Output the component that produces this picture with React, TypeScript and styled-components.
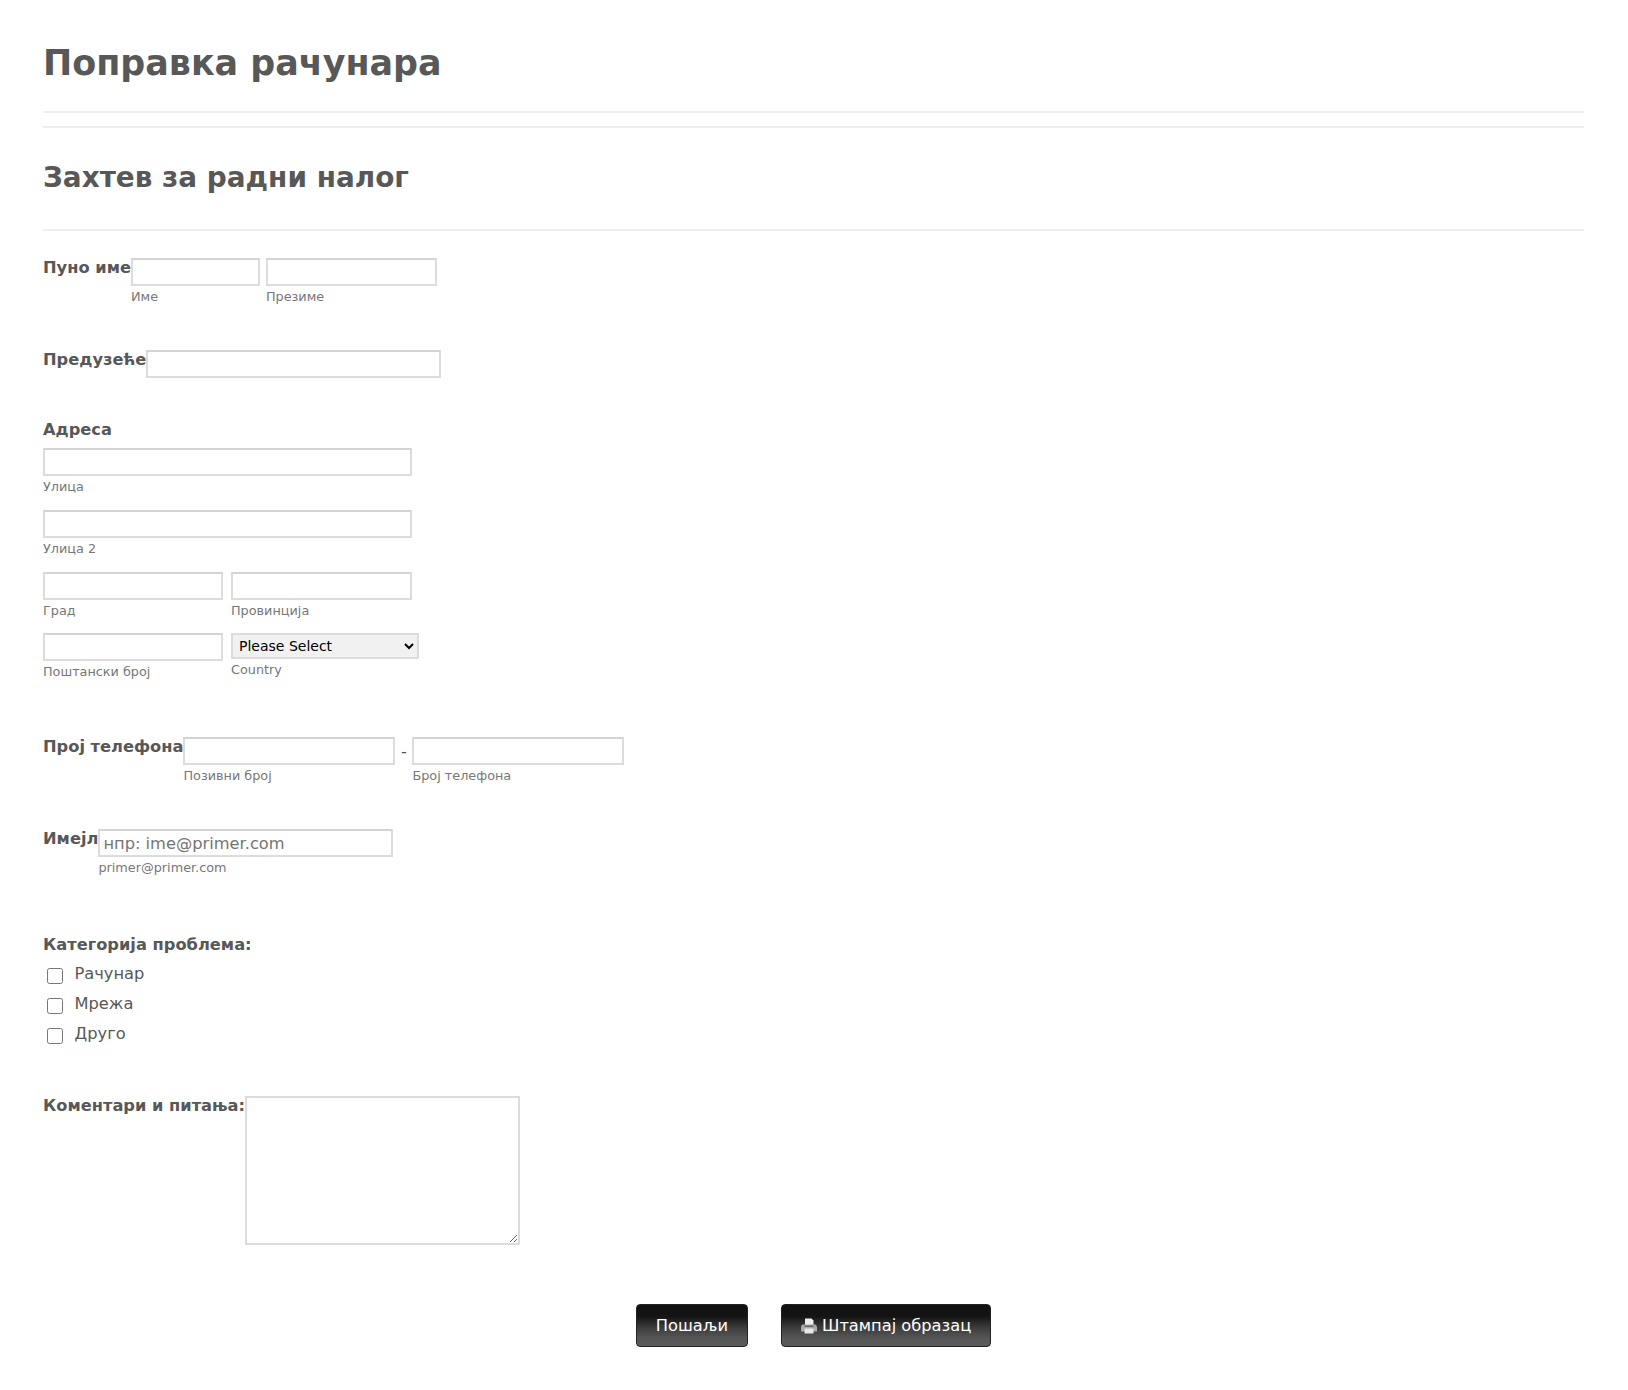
import React, { FC } from "react";
import styled, { createGlobalStyle } from "styled-components";

const GlobalStyle = createGlobalStyle`
  html, body {
    margin: 0;
    padding: 0;
    background: #fff;
    font-family: "DejaVu Sans", Verdana, sans-serif;
    color: #555;
  }
`;

const Form = styled.form`
  width: 1628px;
  height: 1390px;
  box-sizing: border-box;
  padding: 0 44px 0 43px;
`;

const PageTitle = styled.h1`
  margin: 0;
  padding-top: 42px;
  height: 69px;
  font-size: 34.9px;
  line-height: 42px;
  font-weight: bold;
  color: #585858;
`;

const Rule = styled.div<{ $top: number }>`
  height: 2px;
  margin-top: ${({ $top }) => $top}px;
  background: #eee;
`;

const SectionTitle = styled.h2`
  margin: 32px 0 0;
  height: 37px;
  font-size: 27.9px;
  line-height: 36px;
  font-weight: bold;
  color: #585858;
`;

const Row = styled.div<{ $top: number }>`
  display: flex;
  align-items: flex-start;
  margin-top: ${({ $top }) => $top}px;
`;

const Label = styled.label`
  font-size: 16.25px;
  line-height: 20px;
  font-weight: bold;
  color: #585858;
  white-space: nowrap;
`;

const Column = styled.div`
  display: flex;
  flex-direction: column;
`;

const Fields = styled.div<{ $gap: number }>`
  display: flex;
  gap: ${({ $gap }) => $gap}px;
`;

const Input = styled.input<{ $w: number }>`
  display: block;
  box-sizing: border-box;
  width: ${({ $w }) => $w}px;
  height: 28px;
  margin: 0;
  padding: 1px 3px 0;
  border: 2px solid #dcdcdc;
  border-top-color: #d4d4d4;
  background: #fff;
  font-family: "DejaVu Sans", Verdana, sans-serif;
  font-size: 16.25px;
  color: #555;
  &::placeholder {
    color: #757575;
    opacity: 1;
  }
`;

const Sub = styled.span`
  display: block;
  margin-top: 3px;
  font-size: 12.8px;
  line-height: 16px;
  color: #777;
`;

const Dash = styled.span`
  width: 17px;
  text-align: center;
  font-size: 16.25px;
  line-height: 30px;
  color: #555;
`;

const Select = styled.select`
  display: block;
  box-sizing: border-box;
  width: 188px;
  height: 26px;
  margin: 0;
  padding: 0 2px;
  border: 2px solid #dcdcdc;
  background: #f1f1f1;
  font-family: "DejaVu Sans", Verdana, sans-serif;
  font-size: 14px;
  color: #000;
`;

const Checks = styled.div`
  display: flex;
  flex-direction: column;
  margin-top: 9px;
`;

const CheckRow = styled.label`
  display: flex;
  align-items: flex-start;
  height: 30px;
  font-size: 16.25px;
  line-height: 20px;
  color: #585858;
`;

const CheckBox = styled.input`
  box-sizing: border-box;
  width: 16px;
  height: 16px;
  margin: 4px 11.500px 0 4px;
`;

const TextArea = styled.textarea`
  display: block;
  box-sizing: border-box;
  width: 275px;
  height: 149px;
  margin: 0;
  padding: 3px;
  border: 2px solid #dcdcdc;
  background: #fff;
`;

const Buttons = styled.div`
  display: flex;
  justify-content: center;
  gap: 33px;
  margin-top: 59px;
`;

const Button = styled.button`
  display: flex;
  align-items: center;
  justify-content: center;
  gap: 4px;
  box-sizing: border-box;
  height: 43px;
  padding: 0 18.500px;
  border: 1px solid #222;
  border-radius: 4px;
  background: linear-gradient(#111 0%, #141414 28%, #3c3c3c 55%, #555 80%, #5a5a5a 100%);
  color: #fff;
  font-family: "DejaVu Sans", Verdana, sans-serif;
  font-size: 16.25px;
`;

const PrinterIcon: FC = () => (
  <svg width="18" height="18" viewBox="0 0 18 18">
    <path d="M5 1.500h6.500l2 2v4.500h-8.500z" fill="#eee" />
    <path d="M2.500 7.500h13l1.500 2v5h-16v-5z" fill="#aaa" />
    <rect x="4.500" y="11.500" width="9" height="5" fill="#e6e6e6" />
    <rect x="4.500" y="8.500" width="9" height="1.500" fill="#666" />
  </svg>
);

const App: FC = () => (
  <Form onSubmit={e => e.preventDefault()}>
    <GlobalStyle />
    <PageTitle>Поправка рачунара</PageTitle>
    <Rule $top={0} />
    <Rule $top={13} />
    <SectionTitle>Захтев за радни налог</SectionTitle>
    <Rule $top={32} />

    <Row $top={27}>
      <Label>Пуно име</Label>
      <Fields $gap={6}>
        <Column>
          <Input $w={129} />
          <Sub>Име</Sub>
        </Column>
        <Column>
          <Input $w={171} />
          <Sub>Презиме</Sub>
        </Column>
      </Fields>
    </Row>

    <Row $top={45}>
      <Label>Предузеће</Label>
      <Input $w={295} />
    </Row>

    <Row $top={42}>
      <Label>Адреса</Label>
    </Row>

    <Row $top={8}>
      <Column>
        <Input $w={368.5} />
        <Sub>Улица</Sub>
      </Column>
    </Row>

    <Row $top={15}>
      <Column>
        <Input $w={368.5} />
        <Sub>Улица 2</Sub>
      </Column>
    </Row>

    <Row $top={15}>
      <Fields $gap={8}>
        <Column>
          <Input $w={180} />
          <Sub>Град</Sub>
        </Column>
        <Column>
          <Input $w={180.5} />
          <Sub>Провинција</Sub>
        </Column>
      </Fields>
    </Row>

    <Row $top={14}>
      <Fields $gap={8}>
        <Column>
          <Input $w={180} />
          <Sub>Поштански број</Sub>
        </Column>
        <Column>
          <Select defaultValue="">
            <option value="">Please Select</option>
          </Select>
          <Sub>Country</Sub>
        </Column>
      </Fields>
    </Row>

    <Row $top={57}>
      <Label>Прој телефона</Label>
      <Column>
        <Input $w={212} />
        <Sub>Позивни број</Sub>
      </Column>
      <Dash>-</Dash>
      <Column>
        <Input $w={212} />
        <Sub>Број телефона</Sub>
      </Column>
    </Row>

    <Row $top={45}>
      <Label>Имејл</Label>
      <Column>
        <Input $w={295} placeholder="нпр: ime@primer.com" />
        <Sub>primer@primer.com</Sub>
      </Column>
    </Row>

    <Row $top={59}>
      <Label>Категорија проблема:</Label>
    </Row>
    <Checks>
      <CheckRow>
        <CheckBox type="checkbox" />
        Рачунар
      </CheckRow>
      <CheckRow>
        <CheckBox type="checkbox" />
        Мрежа
      </CheckRow>
      <CheckRow>
        <CheckBox type="checkbox" />
        Друго
      </CheckRow>
    </Checks>

    <Row $top={42}>
      <Label>Коментари и питања:</Label>
      <TextArea />
    </Row>

    <Buttons>
      <Button type="submit">Пошаљи</Button>
      <Button type="button">
        <PrinterIcon />
        Штампај образац
      </Button>
    </Buttons>
  </Form>
);

export default App;
